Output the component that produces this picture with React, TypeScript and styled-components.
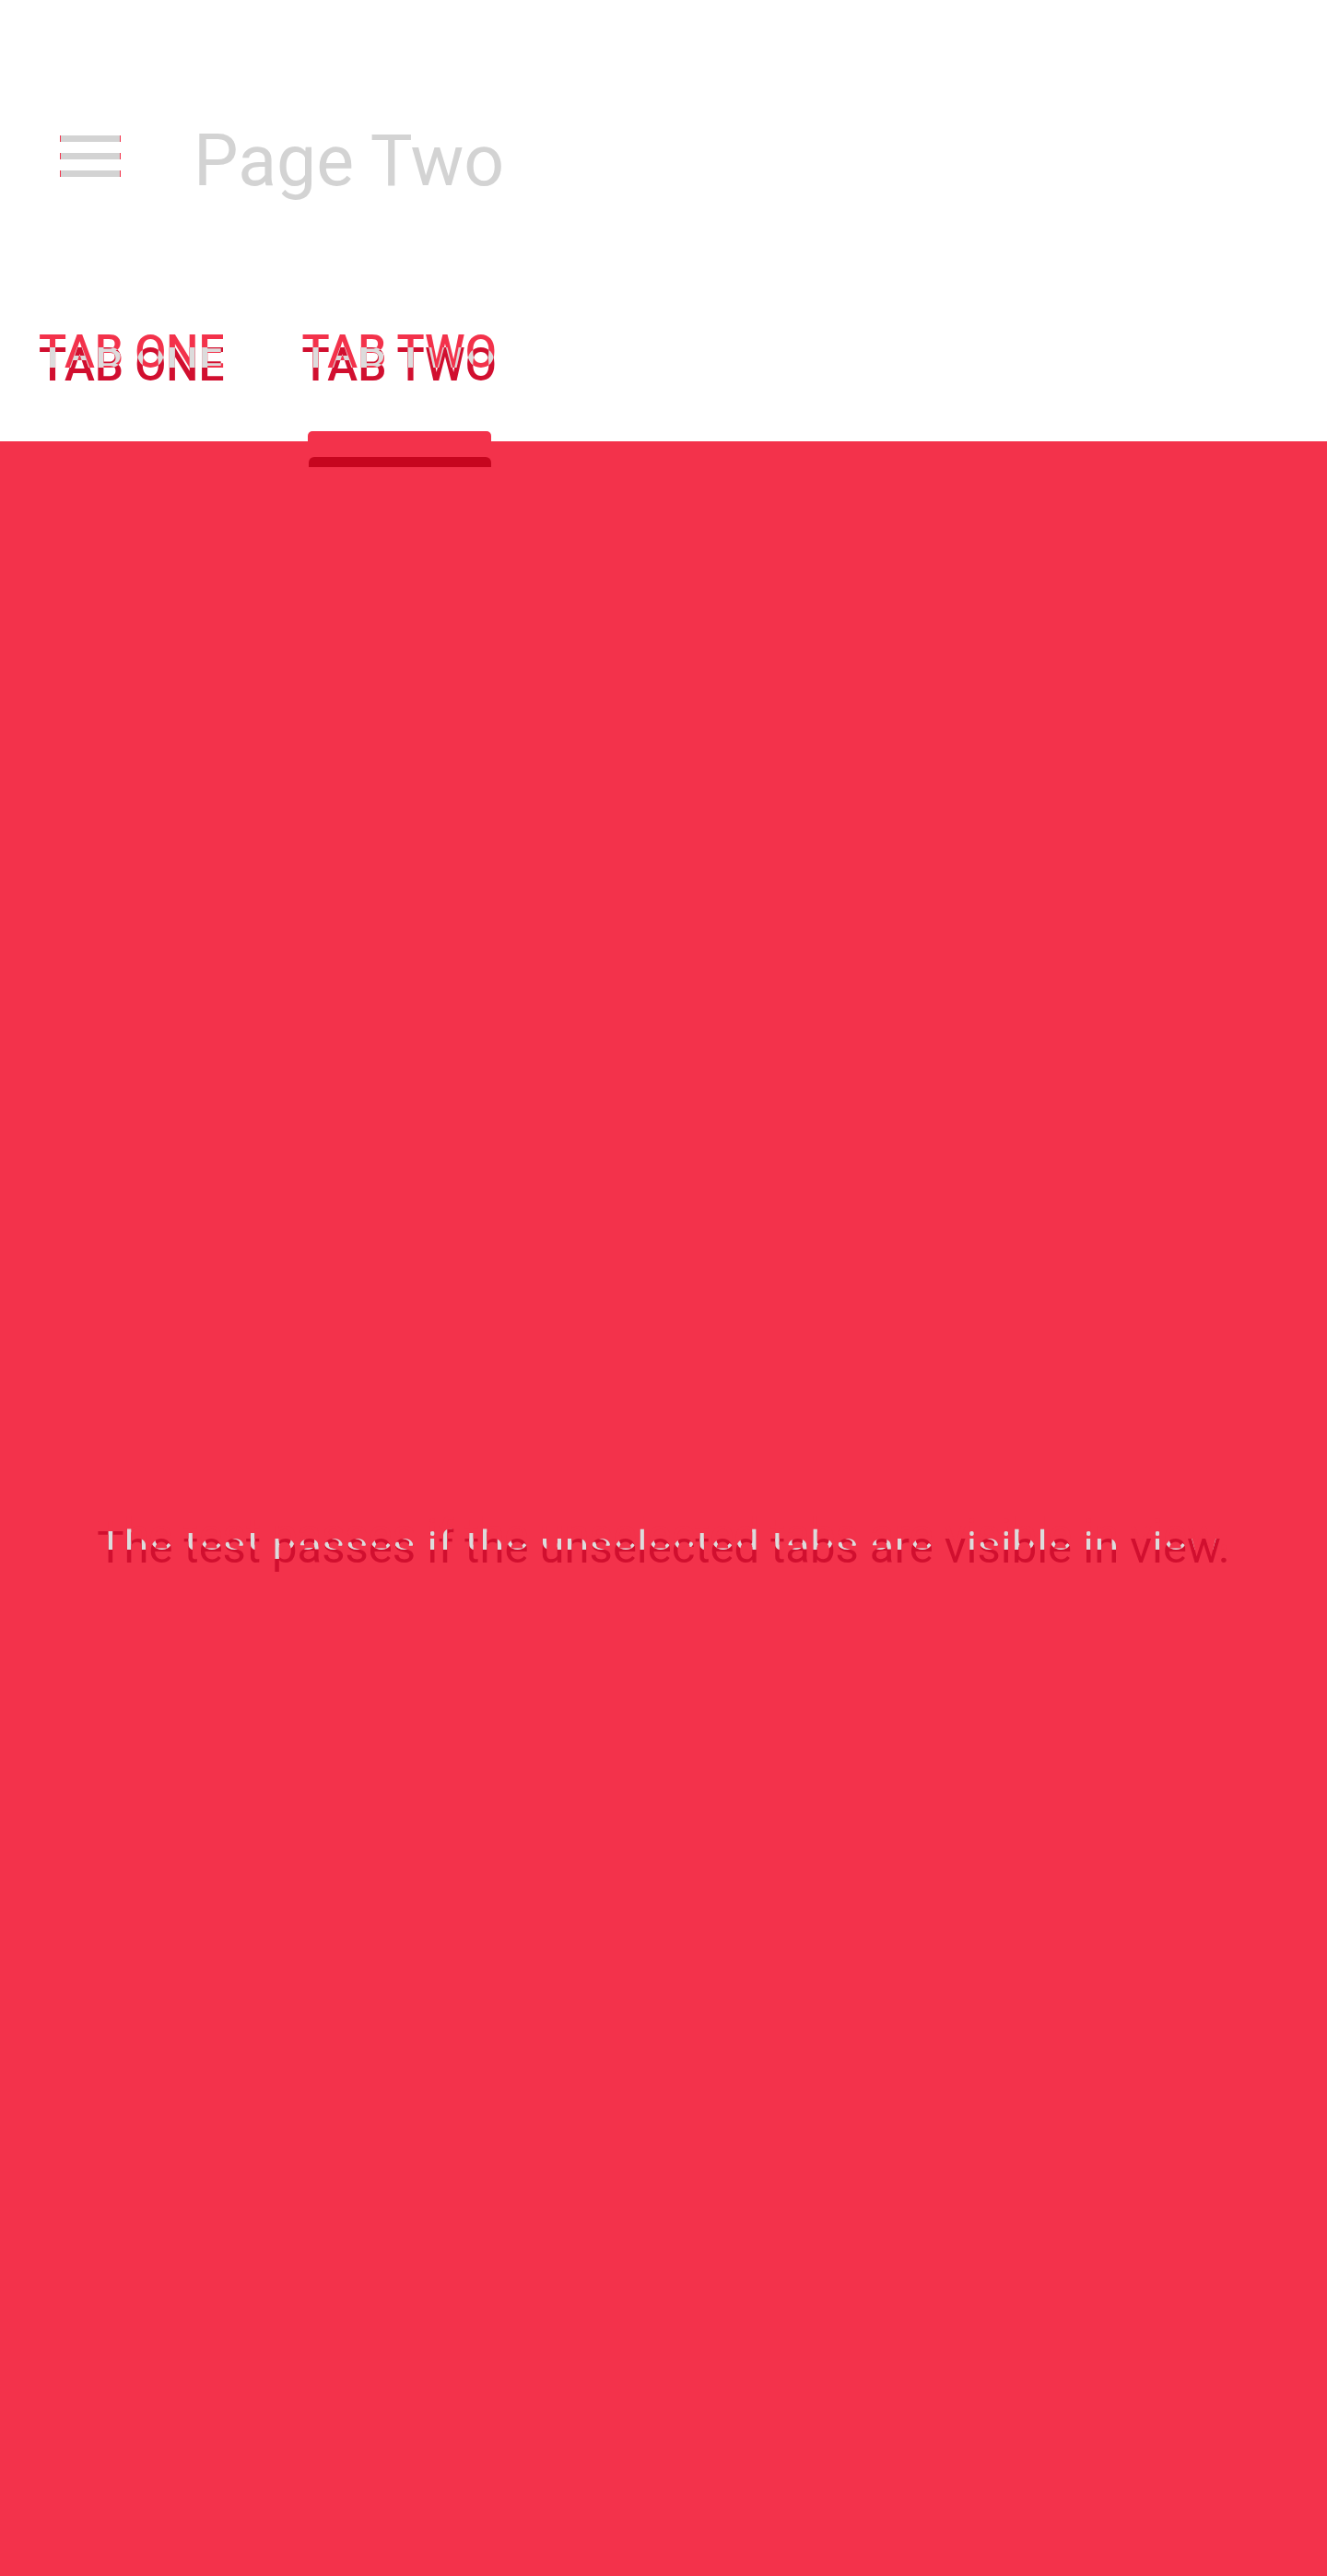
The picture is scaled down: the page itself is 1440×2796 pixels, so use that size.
import React from 'react';
import styled, { createGlobalStyle } from 'styled-components';

const RED = '#f3324b';
const DARK = '#d10f2f';
const BAR = '#c6061f';
const OVERLAP = '#dcdcdc';
const MUTED = '#d3d3d3';
const SHIFT = 14;
const TAB_SIZE = 49.5;
const BODY_SIZE = 49;

const GlobalStyle = createGlobalStyle`
  html, body {
    margin: 0;
    padding: 0;
    background: #fff;
  }
  body {
    font-family: Roboto, 'Liberation Sans', sans-serif;
  }
`;

const Page = styled.div`
  display: flex;
  flex-direction: column;
  min-height: 2796px;
`;

const AppBar = styled.header`
  display: flex;
  align-items: flex-start;
  height: 290px;
  box-sizing: border-box;
  padding: 137px 0 0 65px;
`;

const Hamburger = styled.div`
  display: flex;
  flex-direction: column;
  gap: 12px;
  width: 66px;
  margin-top: 10px;
`;

const HamburgerLine = styled.span`
  display: block;
  height: 7px;
  background: ${MUTED};
  border-left: 1px solid ${RED};
  border-right: 1px solid ${RED};
`;

const Title = styled.h1`
  margin: 0 0 0 79px;
  font: 400 77px/77px Roboto, 'Liberation Sans', sans-serif;
  color: ${MUTED};
`;

const TabBar = styled.nav`
  display: flex;
  align-items: flex-start;
  gap: 84px;
  height: 189px;
  box-sizing: border-box;
  padding: 77px 0 0 42px;
`;

const Tab = styled.div`
  display: flex;
  flex-direction: column;
  font: 500 ${TAB_SIZE}px Roboto, 'Liberation Sans', sans-serif;
  text-transform: uppercase;
`;

const Indicator = styled.div`
  width: 199px;
  height: 11px;
  margin: 43px 0 0 7px;
  border-radius: 5px 5px 0 0;
  background: ${RED};
`;

const Content = styled.main`
  flex: 1;
  display: flex;
  flex-direction: column;
  background: ${RED};
`;

const ShadowBar = styled.div`
  width: 198px;
  height: 11px;
  margin: 17px 0 0 335px;
  border-radius: 6px 6px 0 0;
  background: ${BAR};
`;

const Message = styled.p`
  align-self: center;
  margin: 1144px 0 0;
  font: 400 ${BODY_SIZE}px Roboto, 'Liberation Sans', sans-serif;
`;

// same text drawn twice, the second copy shifted, overlap painted grey
const Stack = styled.span`
  display: inline-grid;
  isolation: isolate;
`;

const Layer = styled.span<{ $tone: string; $lift?: boolean; $clip?: string }>`
  grid-area: 1 / 1;
  white-space: pre;
  color: ${(p) => p.$tone};
  transform: ${(p) => (p.$lift ? `translateY(-${SHIFT}px)` : 'none')};
  clip-path: ${(p) => (p.$clip ? `url(#${p.$clip})` : 'none')};
`;

const Defs = styled.svg`
  position: absolute;
  width: 0;
  height: 0;
  overflow: hidden;
`;

interface DiffTextProps {
  id: string;
  text: string;
  size: number;
  weight: number;
}

const DiffText = ({ id, text, size, weight }: DiffTextProps) => (
  <Stack>
    <Defs aria-hidden="true">
      <clipPath id={id} clipPathUnits="userSpaceOnUse">
        <text
          x="0"
          y={-SHIFT}
          dominantBaseline="text-before-edge"
          fontFamily="Roboto, 'Liberation Sans', sans-serif"
          fontSize={size}
          fontWeight={weight}
        >
          {text}
        </text>
      </clipPath>
    </Defs>
    <Layer $tone={RED} $lift>
      {text}
    </Layer>
    <Layer $tone={DARK}>{text}</Layer>
    <Layer $tone={OVERLAP} $clip={id}>
      {text}
    </Layer>
  </Stack>
);

export default function App() {
  return (
    <Page>
      <GlobalStyle />
      <AppBar>
        <Hamburger>
          <HamburgerLine />
          <HamburgerLine />
          <HamburgerLine />
        </Hamburger>
        <Title>Page Two</Title>
      </AppBar>
      <TabBar>
        <Tab>
          <DiffText id="tab-one" text="TAB ONE" size={TAB_SIZE} weight={500} />
        </Tab>
        <Tab>
          <DiffText id="tab-two" text="TAB TWO" size={TAB_SIZE} weight={500} />
          <Indicator />
        </Tab>
      </TabBar>
      <Content>
        <ShadowBar />
        <Message>
          <DiffText
            id="message"
            text="The test passes if the unselected tabs are visible in view."
            size={BODY_SIZE}
            weight={400}
          />
        </Message>
      </Content>
    </Page>
  );
}
